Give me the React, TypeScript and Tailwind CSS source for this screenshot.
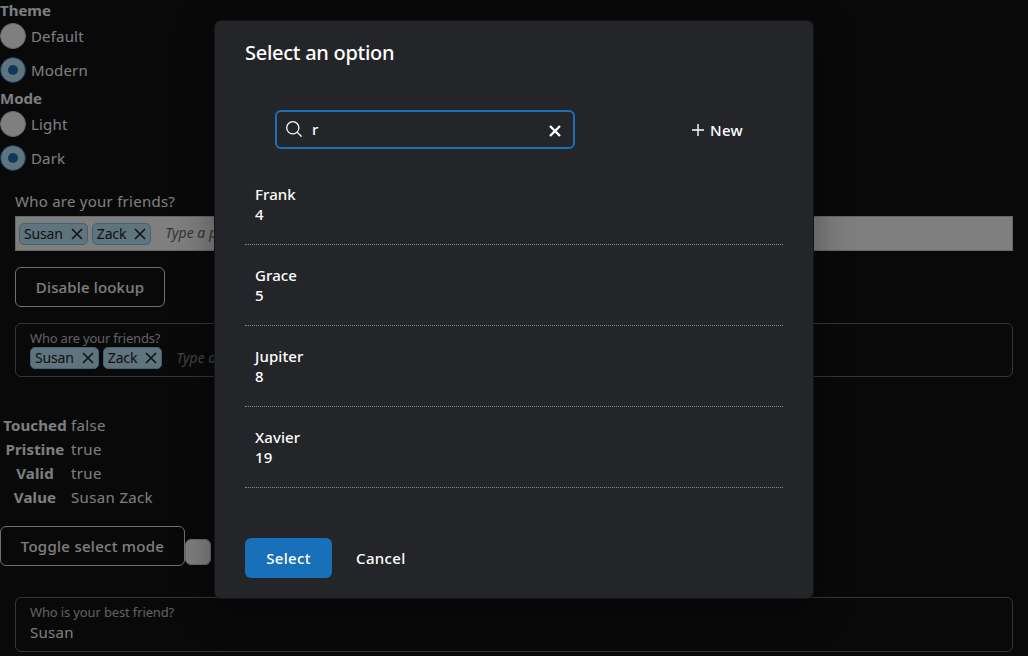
import React from "react";

function Radio({ label, checked = false }: { label: string; checked?: boolean }) {
  return (
    <label className="flex h-[34px] items-center gap-[5px]">
      <span
        className={
          checked
            ? "flex size-[26px] items-center justify-center rounded-full border border-[#1870b8] bg-[#c1e8fb]"
            : "flex size-[26px] items-center justify-center rounded-full border border-[#d2d2d2] bg-white"
        }
      >
        {checked && <span className="size-[10px] rounded-full bg-[#1870b8]" />}
      </span>
      <span className="leading-5 tracking-[0.17px]">{label}</span>
    </label>
  );
}

function Cross({ className }: { className: string }) {
  return (
    <svg viewBox="0 0 12 12" className={className} fill="none" stroke="currentColor">
      <path d="M1 1 11 11M11 1 1 11" />
    </svg>
  );
}

function Token({ name }: { name: string }) {
  return (
    <span className="flex h-[22px] items-center justify-between rounded-[5px] border border-[#7fc8ec] bg-[#c1e8fb] px-[4px] text-[#212327]">
      <span className="pr-[8px] text-[14px] tracking-[-0.15px]">{name}</span>
      <Cross className="size-[12px] stroke-[1.6]" />
    </span>
  );
}

function Person({ name, id }: { name: string; id: number }) {
  return (
    <li className="h-[81px] border-b border-dotted border-[#85888d] px-[10px] pt-[20px] leading-5 tracking-[0.1px]">
      <div>{name}</div>
      <div>{id}</div>
    </li>
  );
}

function StatusRow({ name, value }: { name: string; value: string }) {
  return (
    <div className="flex h-6 items-center">
      <span className="w-[64px] text-center font-bold tracking-[0.15px]">{name}</span>
      <span className="pl-[4px] tracking-[0.35px]">{value}</span>
    </div>
  );
}

const people = [
  { name: "Frank", id: 4 },
  { name: "Grace", id: 5 },
  { name: "Jupiter", id: 8 },
  { name: "Xavier", id: 19 },
];

export default function App() {
  return (
    <div className="relative h-[656px] w-[1028px] overflow-hidden bg-[#121212] font-['Noto_Sans','Open_Sans',sans-serif] text-[15px] leading-5 text-[#fbfcfe]">
      <section className="h-[88px]">
        <h2 className="h-[19px] font-bold">Theme</h2>
        <Radio label="Default" />
        <Radio label="Modern" checked />
      </section>
      <section className="h-[103px]">
        <h2 className="h-[19px] font-bold">Mode</h2>
        <Radio label="Light" />
        <Radio label="Dark" checked />
      </section>

      <div className="px-[15px]">
        <div className="h-[25px] tracking-[0.25px]">Who are your friends?</div>
        <div className="flex h-[35px] items-center gap-[4px] border border-[#cdcfd2] bg-white pl-[3px]">
          <Token name="Susan" />
          <Token name="Zack" />
          <span className="ml-[10px] pb-px text-[14px] text-[#686c73] italic">Type a person’s name</span>
        </div>
        <button className="mt-4 flex h-10 w-[150px] items-center justify-center rounded-md border border-[#e0e0e0] font-medium tracking-[0.15px]">
          Disable lookup
        </button>
        <div className="mt-4 h-[54px] rounded-md border border-[#686c73] px-[14px] pt-[5px]">
          <div className="h-[18px] text-[13px] leading-[18px] tracking-[-0.19px] text-[#c0c2c5]">Who are your friends?</div>
          <div className="flex items-center gap-[4px]">
            <Token name="Susan" />
            <Token name="Zack" />
            <span className="ml-[10px] text-[14px] text-[#85888d] italic">Type a person’s name</span>
          </div>
        </div>
      </div>

      <div className="mt-9 pl-[3px] text-[#fbfcfe]">
        <StatusRow name="Touched" value="false" />
        <StatusRow name="Pristine" value="true" />
        <StatusRow name="Valid" value="true" />
        <StatusRow name="Value" value="Susan Zack" />
      </div>

      <div className="mt-[17px] flex h-10 items-end">
        <button className="flex h-10 w-[185px] items-center justify-center rounded-md border border-[#e0e0e0] font-medium tracking-[0.27px]">
          Toggle select mode
        </button>
        <span className="mb-px size-[26px] rounded-md border border-[#d2d2d2] bg-white" />
      </div>

      <div className="px-[15px] pt-[31px]">
        <div className="h-[55px] rounded-md border border-[#686c73] px-[14px] pt-[5px]">
          <div className="h-[19px] text-[13px] leading-[18px] tracking-[-0.14px] text-[#c0c2c5]">Who is your best friend?</div>
          <div className="tracking-[0.3px]">Susan</div>
        </div>
      </div>

      <div className="absolute inset-0 bg-black/50 pt-[21px] pl-[215px]">
        <div
          role="dialog"
          className="flex h-[577px] w-[598px] flex-col rounded-md bg-[#242529] px-[30px] font-medium text-white shadow-[0_0_0_1px_#141517,0_10px_40px_rgba(0,0,0,0.4)]"
        >
          <h1 className="pt-[20px] text-[20px] leading-6 tracking-[-0.27px]">Select an option</h1>
          <div className="mt-[45px] flex items-center pl-[30px]">
            <div className="flex h-[39px] w-[300px] items-center rounded-md border-2 border-[#1870b8] px-[9px]">
              <svg viewBox="0 0 16 16" className="mb-px size-4" fill="none" stroke="currentColor" strokeWidth="1.3">
                <circle cx="6.8" cy="6.8" r="6.1" />
                <path d="m11.1 11.1 4.5 4.5" />
              </svg>
              <span className="flex-1 pb-px pl-[10px]">r</span>
              <Cross className="mt-[2px] mr-[3px] size-[12px] stroke-[2.4]" />
            </div>
            <div className="flex items-center gap-[6px] pl-[117px]">
              <svg viewBox="0 0 12 12" className="size-[12px]" fill="none" stroke="currentColor" strokeWidth="1.4">
                <path d="M6 0v12M0 6h12" />
              </svg>
              <span className="tracking-[0.3px]">New</span>
            </div>
          </div>
          <ul className="mt-[15px]">
            {people.map((person) => (
              <Person key={person.id} name={person.name} id={person.id} />
            ))}
          </ul>
          <div className="mt-[50px] flex items-center tracking-[0.35px]">
            <button className="h-10 w-[87px] rounded-md bg-[#1870b8]">Select</button>
            <button className="pl-[24px]">Cancel</button>
          </div>
        </div>
      </div>
    </div>
  );
}
